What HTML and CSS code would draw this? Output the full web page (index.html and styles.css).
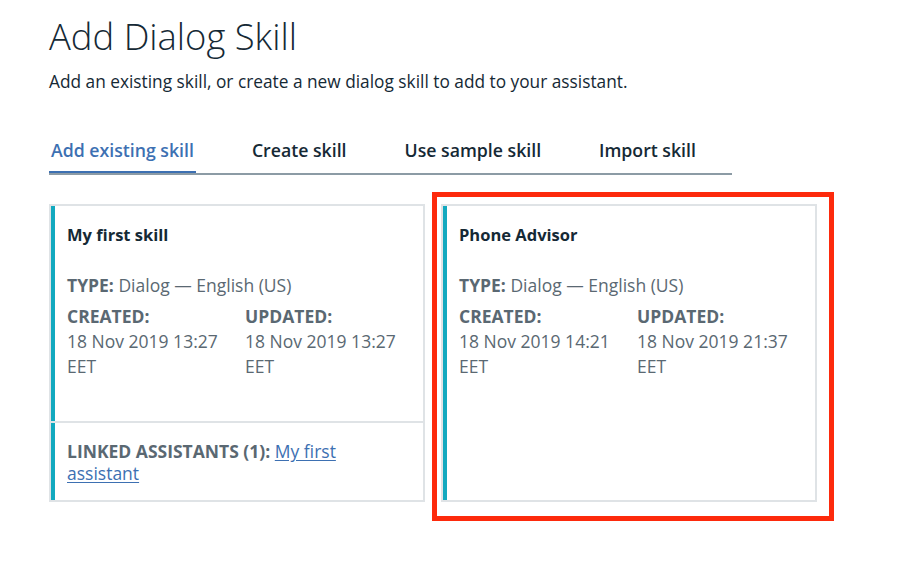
FILE: index.html
```html
<!DOCTYPE html>
<html lang="en">
<head>
<meta charset="utf-8">
<title>Add Dialog Skill</title>
<link rel="stylesheet" href="styles.css">
</head>
<body>
<main class="page">
  <h1 class="title">Add Dialog Skill</h1>
  <p class="subtitle">Add an existing skill, or create a new dialog skill to add to your assistant.</p>

  <nav class="tabs">
    <a class="tab tab--selected">Add existing skill</a>
    <a class="tab">Create skill</a>
    <a class="tab">Use sample skill</a>
    <a class="tab">Import skill</a>
  </nav>

  <section class="cards">
    <article class="card">
      <div class="card__body">
        <h2 class="card__title">My first skill</h2>
        <p class="card__type"><b>TYPE:</b> Dialog — English (US)</p>
        <div class="card__dates">
          <div class="date"><b>CREATED:</b><span>18 Nov 2019 13:27 EET</span></div>
          <div class="date"><b>UPDATED:</b><span>18 Nov 2019 13:27 EET</span></div>
        </div>
      </div>
      <div class="card__footer">
        <b>LINKED ASSISTANTS (1):</b> <a class="link" href="#">My first assistant</a>
      </div>
    </article>

    <article class="card">
      <div class="card__body">
        <h2 class="card__title">Phone Advisor</h2>
        <p class="card__type"><b>TYPE:</b> Dialog — English (US)</p>
        <div class="card__dates">
          <div class="date"><b>CREATED:</b><span>18 Nov 2019 14:21 EET</span></div>
          <div class="date"><b>UPDATED:</b><span>18 Nov 2019 21:37 EET</span></div>
        </div>
      </div>
    </article>
  </section>

  <div class="highlight"></div>
</main>
</body>
</html>
```
FILE: styles.css
```css
* { box-sizing: border-box; }

html, body {
  margin: 0;
  padding: 0;
  background: #ffffff;
}

body {
  font-family: "Open Sans", "Noto Sans", sans-serif;
  color: #152935;
}

.page {
  position: relative;
  padding: 14px 0 0 49px;
  width: 905px;
  height: 583px;
}

.title {
  margin: 0;
  font-size: 36.4px;
  line-height: 44px;
  font-weight: 300;
  color: #152935;
}

.subtitle {
  margin: 11.6px 0 0;
  font-size: 17.3px;
  line-height: 24px;
  font-weight: 400;
  color: #152935;
}

.tabs {
  display: flex;
  width: 683px;
  margin-top: 44px;
  border-bottom: 2px solid #8c9ba5;
}

.tab {
  display: block;
  flex: 0 0 auto;
  white-space: nowrap;
  padding: 0 2px 9.5px;
  margin-right: 54px;
  font-size: 17.7px;
  line-height: 24px;
  font-weight: 600;
  color: #152935;
  border-bottom: 2px solid transparent;
  cursor: pointer;
}

.tab--selected {
  color: #3d70b2;
  border-bottom-color: #3d70b2;
}

.cards {
  display: grid;
  grid-template-columns: 376px 376px;
  column-gap: 16px;
  margin-top: 29px;
}

.card {
  display: flex;
  flex-direction: column;
  height: 298px;
  border: 2px solid #dfe3e6;
  box-shadow: inset 4px 0 0 #12a9bf;
  background: #ffffff;
}

.card__body {
  flex: 1;
  padding: 17.8px 16px 0 16px;
}

.card__title {
  margin: 0;
  font-size: 16.5px;
  line-height: 21px;
  font-weight: 700;
  color: #152935;
}

.card__type {
  margin: 28.4px 0 0;
  font-size: 17.5px;
  line-height: 25.5px;
  color: #5a6872;
}

.card__type b,
.date b,
.card__footer b {
  font-weight: 700;
}

.card__dates {
  display: grid;
  grid-template-columns: 1fr 1fr;
  column-gap: 16px;
  margin-top: 5px;
  font-size: 17.5px;
  line-height: 25px;
  color: #5a6872;
}

.date b,
.date span {
  display: block;
}

.card__footer {
  border-top: 2px solid #dfe3e6;
  padding: 17.3px 16px 16px 16px;
  font-size: 17.5px;
  line-height: 22px;
  color: #5a6872;
}

.link {
  color: #3d70b2;
  text-decoration: underline;
  text-underline-offset: 2px;
}

.highlight {
  position: absolute;
  left: 432px;
  top: 192px;
  width: 402px;
  height: 329px;
  border: 5px solid #fd2a0c;
  pointer-events: none;
}
```
